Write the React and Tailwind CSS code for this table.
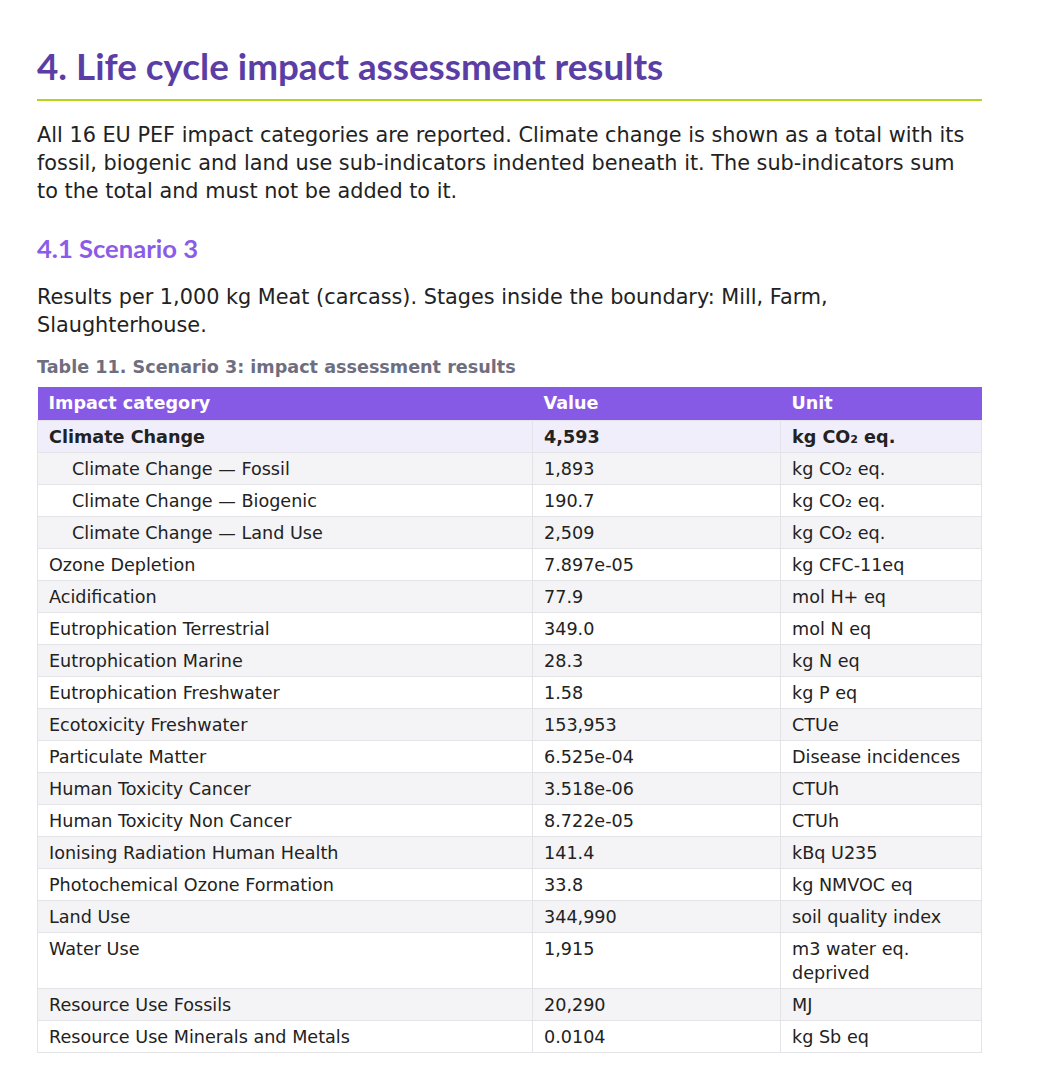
import React from 'react';

const rows = [
  { name: 'Climate Change', value: '4,593', unit: 'kg CO₂ eq.', total: true },
  { name: 'Climate Change — Fossil', value: '1,893', unit: 'kg CO₂ eq.', sub: true },
  { name: 'Climate Change — Biogenic', value: '190.7', unit: 'kg CO₂ eq.', sub: true },
  { name: 'Climate Change — Land Use', value: '2,509', unit: 'kg CO₂ eq.', sub: true },
  { name: 'Ozone Depletion', value: '7.897e-05', unit: 'kg CFC-11eq' },
  { name: 'Acidification', value: '77.9', unit: 'mol H+ eq' },
  { name: 'Eutrophication Terrestrial', value: '349.0', unit: 'mol N eq' },
  { name: 'Eutrophication Marine', value: '28.3', unit: 'kg N eq' },
  { name: 'Eutrophication Freshwater', value: '1.58', unit: 'kg P eq' },
  { name: 'Ecotoxicity Freshwater', value: '153,953', unit: 'CTUe' },
  { name: 'Particulate Matter', value: '6.525e-04', unit: 'Disease incidences' },
  { name: 'Human Toxicity Cancer', value: '3.518e-06', unit: 'CTUh' },
  { name: 'Human Toxicity Non Cancer', value: '8.722e-05', unit: 'CTUh' },
  { name: 'Ionising Radiation Human Health', value: '141.4', unit: 'kBq U235' },
  { name: 'Photochemical Ozone Formation', value: '33.8', unit: 'kg NMVOC eq' },
  { name: 'Land Use', value: '344,990', unit: 'soil quality index' },
  { name: 'Water Use', value: '1,915', unit: 'm3 water eq. deprived' },
  { name: 'Resource Use Fossils', value: '20,290', unit: 'MJ' },
  { name: 'Resource Use Minerals and Metals', value: '0.0104', unit: 'kg Sb eq' }
];

export default function App() {
  return (
    <div className="min-h-screen bg-white text-[#222222] font-['DejaVu_Sans',sans-serif]">
      <div className="w-[945px] ml-[37px] pt-[42px] pb-8">
        {/* Section heading */}
        <h1 className="font-['Lato',sans-serif] font-bold text-[36.8px] leading-[48px] text-[#5a3ea5] pb-[9px] border-b-2 border-[#b4d41c]">
          4. Life cycle impact assessment results
        </h1>
        <p className="mt-[20px] text-[20.8px] leading-[28px]">
          All 16 EU PEF impact categories are reported. Climate change is shown as a total with its fossil, biogenic and land use sub-indicators indented beneath it. The sub-indicators sum to the total and must not be added to it.
        </p>

        <h2 className="mt-[27px] font-['Lato',sans-serif] font-bold text-[25.6px] leading-[32px] text-[#8a5ce8]">
          4.1 Scenario 3
        </h2>
        <p className="mt-[19px] text-[20.8px] leading-[28px]">
          Results per 1,000 kg Meat (carcass). Stages inside the boundary: Mill, Farm, Slaughterhouse.
        </p>

        {/* Table */}
        <div className="mt-[16px] text-[17.6px] leading-[24px] font-bold text-[#6e6e80]">
          Table 11. Scenario 3: impact assessment results
        </div>
        <table className="mt-[8px] w-full border-collapse text-[17.6px] leading-[24px]">
          <thead>
            <tr className="bg-[#875ae6] text-white font-bold text-left">
              <th className="w-[495px] px-[11px] py-[4px] leading-[25px]">Impact category</th>
              <th className="w-[248px] px-[11px] py-[4px] leading-[25px]">Value</th>
              <th className="px-[11px] py-[4px] leading-[25px]">Unit</th>
            </tr>
          </thead>
          <tbody>
            {rows.map((r, i) => (
              <tr
                key={i}
                className={
                  r.total ? 'bg-[#f1eefb] font-bold' : i % 2 === 1 ? 'bg-[#f4f4f6]' : 'bg-white'
                }
              >
                <td className={`border border-[#e4e4e8] py-[3.5px] align-top ${r.sub ? 'pl-[34px] pr-[11px]' : 'px-[11px]'}`}>
                  {r.name}
                </td>
                <td className="border border-[#e4e4e8] px-[11px] py-[3.5px] align-top">{r.value}</td>
                <td className="border border-[#e4e4e8] px-[11px] py-[3.5px] align-top">{r.unit}</td>
              </tr>
            ))}
          </tbody>
        </table>
      </div>
    </div>
  );
}
